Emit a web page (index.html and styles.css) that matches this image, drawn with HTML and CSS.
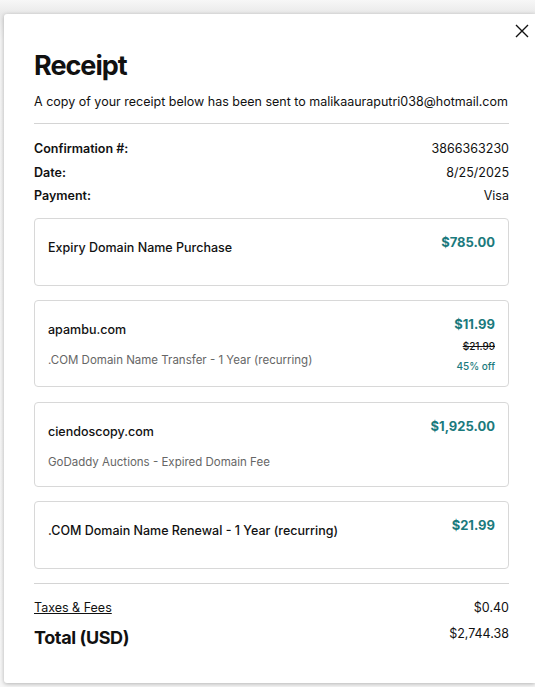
FILE: index.html
```html
<!DOCTYPE html>
<html>
<head>
<meta charset="utf-8">
<link rel="stylesheet" href="styles.css">
</head>
<body>
<div class="modal">
  <button class="close" aria-label="Close">
    <svg width="14" height="14" viewBox="0 0 14 14"><path d="M1 1L13 13M13 1L1 13" stroke="#111" stroke-width="1.4" fill="none"/></svg>
  </button>
  <h1 class="title">Receipt</h1>
  <p class="sub">A copy of your receipt below has been sent to malikaauraputri038@hotmail.com</p>
  <hr class="rule">
  <div class="meta">
    <div class="meta-row"><span class="label">Confirmation #:</span><span>3866363230</span></div>
    <div class="meta-row"><span class="label">Date:</span><span>8/25/2025</span></div>
    <div class="meta-row"><span class="label">Payment:</span><span>Visa</span></div>
  </div>
  <div class="items">
    <div class="card card-a">
      <div class="info"><div class="name">Expiry Domain Name Purchase</div></div>
      <div class="price"><div class="amt">$785.00</div></div>
    </div>
    <div class="card card-b">
      <div class="info"><div class="name">apambu.com</div><div class="desc">.COM Domain Name Transfer - 1 Year (recurring)</div></div>
      <div class="price"><div class="amt">$11.99</div><div class="old">$21.99</div><div class="off">45% off</div></div>
    </div>
    <div class="card card-c">
      <div class="info"><div class="name">ciendoscopy.com</div><div class="desc">GoDaddy Auctions - Expired Domain Fee</div></div>
      <div class="price"><div class="amt">$1,925.00</div></div>
    </div>
    <div class="card card-a">
      <div class="info"><div class="name">.COM Domain Name Renewal - 1 Year (recurring)</div></div>
      <div class="price"><div class="amt">$21.99</div></div>
    </div>
  </div>
  <hr class="rule rule2">
  <div class="totals">
    <div class="tax-row"><a class="tax">Taxes &amp; Fees</a><span>$0.40</span></div>
    <div class="total-row"><span class="total-label">Total (USD)</span><span class="total-val">$2,744.38</span></div>
  </div>
</div>
</body>
</html>
```
FILE: styles.css
```css
html, body { margin: 0; padding: 0; }
body {
  background: linear-gradient(#f7f7f7, #e9e9e9 14px, #f4f4f4 40px, #f6f6f6);
  width: 535px; height: 687px; overflow: hidden;
  font-family: Inter, "Noto Sans", sans-serif;
  color: #111;
  padding-top: 14px;
  padding-left: 4px;
  box-sizing: border-box;
}
.modal {
  position: relative;
  background: #fff;
  width: 531px;
  height: 669px;
  box-sizing: border-box;
  padding: 36px 0 0 30px;
  box-shadow: 0 1px 4px rgba(0,0,0,0.28);
  border-radius: 3px 0 0 3px;
}
.close {
  position: absolute; top: 10px; left: 511px;
  border: 0; background: none; padding: 0; width: 14px; height: 14px;
}
.close svg { display: block; }
.title { margin: 0; font-size: 27px; font-weight: 700; line-height: 32px; letter-spacing: -1px; }
.sub { margin: 12px 0 0; font-size: 12.5px; line-height: 16px; }
.rule { width: 475px; margin: 13px 0 0; border: 0; border-top: 1px solid #d4d4d4; height: 0; }
.meta { width: 475px; margin-top: 17px; display: flex; flex-direction: column; gap: 7.5px; font-size: 12.5px; line-height: 16px; }
.meta-row { display: flex; justify-content: space-between; }
.label { font-weight: 600; }
.items { width: 475px; margin-top: 14px; display: flex; flex-direction: column; gap: 14px; }
.card {
  border: 1px solid #d8d8d8; border-radius: 4px; box-sizing: border-box;
  display: flex; justify-content: space-between;
  padding: 15px 13px 0 13px;
}
.card-a { height: 68px; }
.card-a .name { margin-top: 6px; }
.card-b { height: 87px; }
.card-c { height: 85px; margin-top: 1px; }
.name { font-size: 12.5px; font-weight: 500; line-height: 16px; margin-top: 6px; }
.desc { font-size: 11.5px; color: #666; line-height: 16px; margin-top: 14px; }
.price { text-align: right; color: #1b7a7d; }
.amt { font-size: 13px; font-weight: 700; line-height: 16px; }
.old { font-size: 10px; color: #111; text-decoration: line-through; line-height: 14px; margin-top: 7px; font-weight: 500; }
.off { font-size: 10px; line-height: 14px; margin-top: 6px; font-weight: 500; }
.rule2 { margin-top: 14px; }
.totals { width: 475px; margin-top: 16px; font-size: 12.5px; line-height: 16px; }
.tax-row { display: flex; justify-content: space-between; }
.tax { text-decoration: underline; color: #111; }
.total-row { display: flex; justify-content: space-between; margin-top: 10px; }
.total-label { font-size: 18px; font-weight: 700; line-height: 24px; letter-spacing: -0.4px; }
.total-val { line-height: 16px; }
```
